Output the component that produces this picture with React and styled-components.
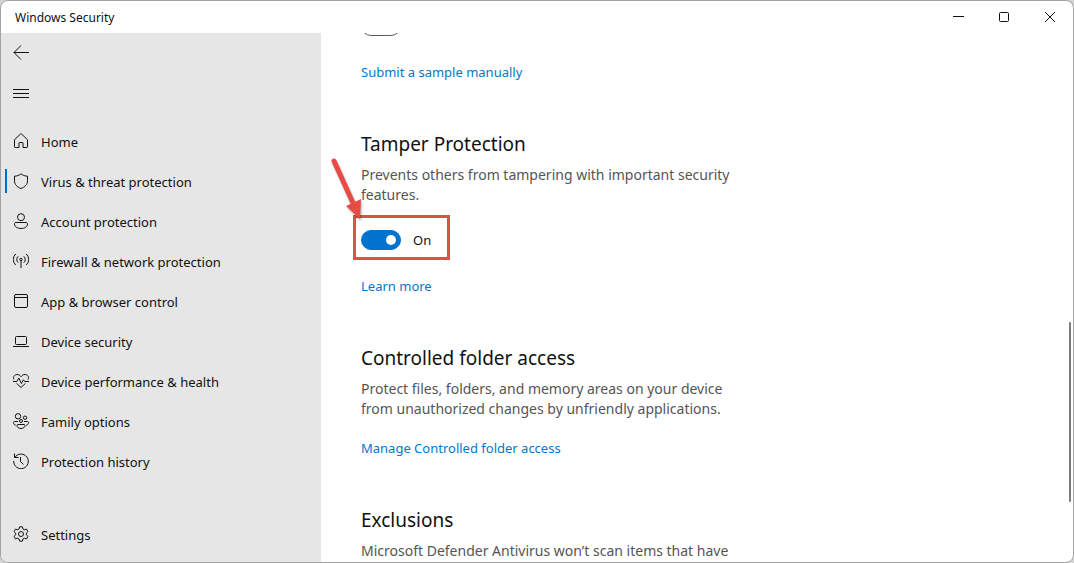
import React, { useState } from "react";
import styled, { createGlobalStyle } from "styled-components";

const navItems = [
  { id: "home", label: "Home" },
  { id: "virus", label: "Virus & threat protection" },
  { id: "account", label: "Account protection" },
  { id: "firewall", label: "Firewall & network protection" },
  { id: "app", label: "App & browser control" },
  { id: "device", label: "Device security" },
  { id: "health", label: "Device performance & health" },
  { id: "family", label: "Family options" },
  { id: "history", label: "Protection history" },
];

const icons = {
  back: <path d="M16 7.5H1M8 .5l-7 7 7 7" />,
  menu: <path d="M0 4.5h16M0 8.5h16M0 12.5h16" />,
  home: (
    <path d="M1.5 6.7L7.3 1.2a1 1 0 0 1 1.4 0l5.8 5.5v7.1a.7.7 0 0 1-.7.7H10V10a.5.5 0 0 0-.5-.5h-3a.5.5 0 0 0-.5.5v4.5H2.200a.7.7 0 0 1-.7-.7z" />
  ),
  virus: (
    <path d="M8 .8c1.8 1.5 3.9 2.3 6.5 2.4v4.6c0 3.6-2.4 6.2-6.5 7.7-4.1-1.5-6.5-4.1-6.5-7.7V3.2C4.1 3.1 6.2 2.3 8 .8z" />
  ),
  account: (
    <>
      <circle cx="8" cy="4.2" r="3.5" />
      <path d="M3 9.5h10c.9 0 1.500.6 1.500 1.500 0 2.700-2.700 4.500-6.500 4.500S1.500 13.700 1.500 11c0-.9.6-1.500 1.500-1.500z" />
    </>
  ),
  firewall: (
    <>
      <circle cx="8" cy="6.500" r="1.200" />
      <path d="M8 7.700V15M5.200 9.700a4.300 4.300 0 0 1 0-6.400M10.800 9.700a4.300 4.300 0 0 0 0-6.400M2.700 12a7.500 7.500 0 0 1 0-11M13.300 12a7.500 7.500 0 0 0 0-11" />
    </>
  ),
  app: (
    <>
      <rect x="1.500" y="1.500" width="13" height="13" rx="1.500" />
      <path d="M1.500 4.500h13" />
    </>
  ),
  device: (
    <>
      <rect x="2.500" y="3.500" width="11" height="8" rx="1" />
      <path d="M0 13.500h16" />
    </>
  ),
  health: (
    <>
      <path d="M.8 6.500C-.3 3.200 1.800 1.500 4 1.500c1.800 0 3 .8 4 2.200 1-1.400 2.200-2.200 4-2.200 2.200 0 4.300 1.700 3.200 5" />
      <path d="M0 8.500h3.800l2-3.500 2.600 5.500 2-3.700 1.300 1.700H16M3.500 10.300L8 14.500l4.500-4.200" />
    </>
  ),
  family: (
    <>
      <circle cx="5" cy="3.300" r="2.700" />
      <circle cx="12" cy="4.700" r="1.700" />
      <circle cx="8" cy="8" r="1.500" />
      <path d="M5 11.500h6c.6 0 1 .4 1 1 0 1.800-1.700 3-4 3s-4-1.200-4-3c0-.6.4-1 1-1zM5 8.500H1.500c-.6 0-1 .4-1 1 0 1.400.8 2.400 2.300 2.800M11 8.500h3.500c.6 0 1 .4 1 1 0 1.400-.8 2.400-2.300 2.800" />
    </>
  ),
  history: (
    <path d="M1.500.5v4h4M1.800 4.500A7.300 7.300 0 1 1 .7 8M7.500 4v4.500l3 3" />
  ),
  settings: (
    <>
      <circle cx="8" cy="8" r="2.500" />
      <path d="M6.600.8h2.800l.5 2.200 1.400.8 2.200-.7 1.500 2.500-1.700 1.600v1.600l1.700 1.600-1.500 2.500-2.200-.7-1.400.8-.5 2.200H6.600L6.100 13l-1.400-.8-2.200.7L1 10.400l1.700-1.600V7.200L1 5.600l1.500-2.500 2.200.7L6.100 3z" />
    </>
  ),
};

function Icon({ name }) {
  return (
    <IconSvg viewBox="0 0 16 16" aria-hidden="true">
      {icons[name]}
    </IconSvg>
  );
}

function App() {
  const [active, setActive] = useState("virus");
  const [samples, setSamples] = useState(false);
  const [tamper, setTamper] = useState(true);

  return (
    <>
      <GlobalStyle />
      <Window>
        <TitleBar>
          <Title>Windows Security</Title>
          <WindowButton aria-label="Minimize">
            <CaptionSvg viewBox="0 0 11 11">
              <path d="M0 4.500h11" />
            </CaptionSvg>
          </WindowButton>
          <WindowButton aria-label="Maximize">
            <CaptionSvg viewBox="0 0 11 11">
              <rect x=".5" y=".5" width="9" height="9" rx="1" />
            </CaptionSvg>
          </WindowButton>
          <WindowButton aria-label="Close">
            <CaptionSvg viewBox="0 0 11 11">
              <path d="M0 0l10 10M10 0L0 10" />
            </CaptionSvg>
          </WindowButton>
        </TitleBar>
        <Body>
          <Sidebar>
            <NavButton aria-label="Back">
              <Icon name="back" />
            </NavButton>
            <NavButton aria-label="Menu">
              <Icon name="menu" />
            </NavButton>
            <NavList>
              {navItems.map((item) => (
                <NavButton
                  key={item.id}
                  $active={item.id === active}
                  onClick={() => setActive(item.id)}
                >
                  <Icon name={item.id} />
                  <NavText>{item.label}</NavText>
                </NavButton>
              ))}
            </NavList>
            <NavButton>
              <Icon name="settings" />
              <NavText>Settings</NavText>
            </NavButton>
          </Sidebar>
          <Content>
            <Section>
              <Switch
                type="checkbox"
                role="switch"
                aria-label="Automatic sample submission"
                checked={samples}
                onChange={(e) => setSamples(e.target.checked)}
              />
              <TextLink href="#sample">Submit a sample manually</TextLink>
            </Section>
            <Section>
              <Heading>Tamper Protection</Heading>
              <Text>
                Prevents others from tampering with important security features.
              </Text>
              <SwitchLabel>
                <Switch
                  type="checkbox"
                  role="switch"
                  checked={tamper}
                  onChange={(e) => setTamper(e.target.checked)}
                />
                {tamper ? "On" : "Off"}
                <Highlight />
                <Arrow viewBox="0 0 36 66" aria-hidden="true">
                  <path d="M6 6L25 48" stroke="#e74c44" strokeWidth="5" strokeLinecap="round" />
                  <path d="M32 64L18 51l15-7z" fill="#e74c44" />
                </Arrow>
              </SwitchLabel>
              <TextLink href="#tamper">Learn more</TextLink>
            </Section>
            <Section>
              <Heading>Controlled folder access</Heading>
              <Text>
                Protect files, folders, and memory areas on your device from
                unauthorized changes by unfriendly applications.
              </Text>
              <TextLink href="#folders">Manage Controlled folder access</TextLink>
            </Section>
            <Section>
              <Heading>Exclusions</Heading>
              <Text>
                Microsoft Defender Antivirus won’t scan items that have
              </Text>
            </Section>
            <ScrollThumb />
          </Content>
        </Body>
      </Window>
    </>
  );
}

export default App;

const GlobalStyle = createGlobalStyle`
  * {
    box-sizing: border-box;
  }
  body {
    margin: 0;
    background: #d4d4d4;
    color: #111;
    font-family: "Noto Sans", "Open Sans", sans-serif;
    font-size: 13px;
  }
  button {
    font: inherit;
    color: inherit;
    background: none;
    border: none;
    padding: 0;
  }
`;

const Window = styled.div`
  display: flex;
  flex-direction: column;
  height: 100vh;
  background: #fff;
  border: 1px solid #a3a3a3;
  border-radius: 8px;
  overflow: hidden;
`;

const TitleBar = styled.header`
  display: flex;
  flex: none;
  height: 32px;
`;

const Title = styled.h1`
  flex: 1;
  margin: 0;
  padding-left: 14px;
  font-size: 12px;
  font-weight: 400;
  line-height: 34px;
`;

const WindowButton = styled.button`
  display: flex;
  align-items: center;
  justify-content: center;
  width: 46px;
  &:hover {
    background: #e9e9e9;
  }
`;

const CaptionSvg = styled.svg`
  width: 11px;
  height: 11px;
  fill: none;
  stroke: #111;
`;

const Body = styled.div`
  display: flex;
  flex: 1;
  min-height: 0;
`;

const Sidebar = styled.aside`
  display: flex;
  flex-direction: column;
  flex: none;
  width: 320px;
  padding-bottom: 8px;
  background: #e6e6e6;
`;

const NavList = styled.nav`
  flex: 1;
  margin-top: 8px;
`;

const NavButton = styled.button`
  position: relative;
  display: flex;
  align-items: center;
  gap: 12px;
  width: 100%;
  height: 40px;
  padding-left: 12px;
  text-align: left;
  &::before {
    content: "";
    display: ${(props) => (props.$active ? "block" : "none")};
    position: absolute;
    left: 4px;
    width: 2px;
    height: 24px;
    background: #0070c8;
  }
  &:hover {
    background: #dcdcdc;
  }
`;

const NavText = styled.span`
  padding-top: 2px;
`;

const IconSvg = styled.svg`
  flex: none;
  width: 16px;
  height: 16px;
  fill: none;
  stroke: #111;
  stroke-width: 1;
`;

const Content = styled.main`
  position: relative;
  display: flex;
  flex-direction: column;
  flex: 1;
  gap: 48px;
  padding-left: 40px;
  overflow: hidden;
`;

const Section = styled.section`
  display: flex;
  flex-direction: column;
  align-items: flex-start;
  flex: none;
  max-width: 380px;
  /* the page is scrolled past the top of the first section */
  &:first-child {
    margin-top: -17px;
  }
`;

const Heading = styled.h2`
  margin: 0 0 7px;
  font-size: 19px;
  font-weight: 400;
  line-height: 28px;
`;

const Text = styled.p`
  margin: 0;
  color: #555;
  font-size: 14px;
  line-height: 20px;
  & + a {
    margin-top: 19px;
  }
`;

const TextLink = styled.a`
  margin-top: 26px;
  color: #0078d0;
  line-height: 20px;
  text-decoration: none;
  &:hover {
    color: #555;
  }
`;

const SwitchLabel = styled.label`
  position: relative;
  display: flex;
  align-items: center;
  gap: 12px;
  height: 20px;
  margin-top: 25px;
`;

const Switch = styled.input`
  appearance: none;
  display: flex;
  align-items: center;
  width: 40px;
  height: 20px;
  margin: 0;
  padding: 0 4px;
  border: 1px solid #5c5c5c;
  border-radius: 10px;
  &::before {
    content: "";
    width: 10px;
    height: 10px;
    border-radius: 50%;
    background: #5c5c5c;
  }
  &:checked {
    justify-content: flex-end;
    border-color: #0073cf;
    background: #0073cf;
  }
  &:checked::before {
    background: #fff;
  }
`;

const Highlight = styled.span`
  position: absolute;
  top: -15px;
  left: -8px;
  width: 97px;
  height: 45px;
  border: 3px solid #e04f48;
  pointer-events: none;
`;

const Arrow = styled.svg`
  position: absolute;
  top: -75px;
  left: -33px;
  width: 36px;
  height: 66px;
  fill: none;
  filter: drop-shadow(1px 2px 1px rgba(0, 0, 0, 0.3));
  pointer-events: none;
`;

const ScrollThumb = styled.div`
  position: absolute;
  bottom: 60px;
  right: 2px;
  width: 2px;
  height: 34%;
  border-radius: 1px;
  background: #7a7a7a;
`;
